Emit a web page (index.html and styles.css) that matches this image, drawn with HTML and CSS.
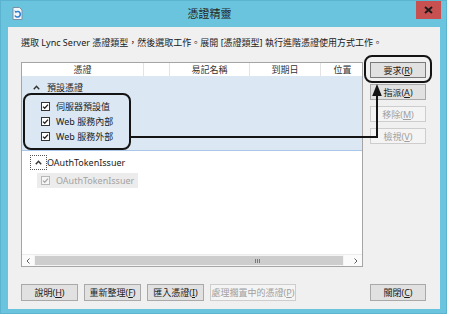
FILE: index.html
```html
<!DOCTYPE html>
<html lang="zh-Hant">
<head>
    <meta charset="UTF-8">
    <meta name="viewport" content="width=device-width, initial-scale=1.0">
    <title>憑證精靈</title>
    <link rel="stylesheet" href="styles.css">
</head>
<body>
    <div class="window">
        <div class="titlebar">
            <svg class="app-icon" viewBox="0 0 11 13">
                <path d="M1 .5h6.5L10 3v9.5H1z" fill="#f4f7fa" stroke="#7d8fa3"/>
                <path d="M3 8.5a2.8 2.8 0 1 0 1-3.6" fill="none" stroke="#2f7fd0" stroke-width="1.6"/>
                <path d="M2.3 3.6l2.6.6-1 2.3z" fill="#2f7fd0"/>
            </svg>
            <div class="title">憑證精靈</div>
            <div class="close-box">
                <svg width="9" height="8" viewBox="0 0 9 8"><path d="M1 1l7 6M8 1L1 7" stroke="#1b1b1b" stroke-width="2"/></svg>
            </div>
        </div>

        <div class="client">
            <p class="intro">選取 Lync Server 憑證類型，然後選取工作。展開 [憑證類型] 執行進階憑證使用方式工作。</p>

            <div class="main">
                <div class="list">
                    <div class="list-head">
                        <span class="col c1">憑證</span>
                        <span class="col c2"></span>
                        <span class="col c3">易記名稱</span>
                        <span class="col c4">到期日</span>
                        <span class="col c5">位置</span>
                    </div>

                    <div class="list-body">
                        <div class="group open">
                            <div class="group-head">
                                <span class="chev"><svg width="7" height="5" viewBox="0 0 7 5"><path d="M.8 4.2l2.7-3 2.7 3" fill="none" stroke="#333" stroke-width="1.4"/></svg></span>
                                預設憑證
                            </div>
                            <div class="item">
                                <svg class="check" viewBox="0 0 9 9"><rect x=".5" y=".5" width="8" height="8" fill="#fff" stroke="#333"/><path d="M2 4.6l1.7 1.7L7 2.6" fill="none" stroke="#222" stroke-width="1.3"/></svg>
                                伺服器預設值
                            </div>
                            <div class="item">
                                <svg class="check" viewBox="0 0 9 9"><rect x=".5" y=".5" width="8" height="8" fill="#fff" stroke="#333"/><path d="M2 4.6l1.7 1.7L7 2.6" fill="none" stroke="#222" stroke-width="1.3"/></svg>
                                Web 服務內部
                            </div>
                            <div class="item">
                                <svg class="check" viewBox="0 0 9 9"><rect x=".5" y=".5" width="8" height="8" fill="#fff" stroke="#333"/><path d="M2 4.6l1.7 1.7L7 2.6" fill="none" stroke="#222" stroke-width="1.3"/></svg>
                                Web 服務外部
                            </div>
                        </div>

                        <div class="group">
                            <div class="group-head">
                                <span class="chev focus"><svg width="7" height="5" viewBox="0 0 7 5"><path d="M.8 4.2l2.7-3 2.7 3" fill="none" stroke="#333" stroke-width="1.4"/></svg></span>
                                OAuthTokenIssuer
                            </div>
                            <div class="item disabled">
                                <svg class="check" viewBox="0 0 9 9"><rect x=".5" y=".5" width="8" height="8" fill="#f6f6f6" stroke="#b8b8b8"/><path d="M2 4.6l1.7 1.7L7 2.6" fill="none" stroke="#a9a9a9" stroke-width="1.3"/></svg>
                                OAuthTokenIssuer
                            </div>
                        </div>
                    </div>

                    <div class="hscroll">
                        <span class="sb-arrow"><svg width="4" height="6" viewBox="0 0 4 6"><path d="M3.5.5L1 3l2.5 2.5" fill="none" stroke="#606060"/></svg></span>
                        <span class="sb-thumb"><span class="grip"></span></span>
                        <span class="sb-track"></span>
                        <span class="sb-arrow"><svg width="4" height="6" viewBox="0 0 4 6"><path d="M.5.5L3 3 .5 5.5" fill="none" stroke="#606060"/></svg></span>
                    </div>
                </div>

                <div class="side">
                    <button class="btn default">要求(<u>R</u>)</button>
                    <button class="btn">指派(<u>A</u>)</button>
                    <button class="btn" disabled>移除(<u>M</u>)</button>
                    <button class="btn" disabled>檢視(<u>V</u>)</button>
                </div>
            </div>

            <div class="footer">
                <button class="btn">說明(<u>H</u>)</button>
                <button class="btn">重新整理(<u>F</u>)</button>
                <button class="btn">匯入憑證(<u>I</u>)</button>
                <button class="btn wide" disabled>處理擱置中的憑證(<u>P</u>)</button>
                <button class="btn close-btn">關閉(<u>C</u>)</button>
            </div>

            <!-- callout drawn over the dialog -->
            <svg class="callout" viewBox="0 0 432 282">
                <rect x="16" y="67" width="106" height="55" rx="7" fill="none" stroke="#141414" stroke-width="2"/>
                <rect x="357" y="29" width="66" height="26" rx="7" fill="none" stroke="#141414" stroke-width="2"/>
                <polyline points="122,110 369,110 369,68" fill="none" stroke="#141414" stroke-width="2"/>
                <path d="M369 57l4.8 12h-9.6z" fill="#141414"/>
            </svg>
        </div>
    </div>
</body>
</html>
```

FILE: styles.css
```css
* {
    margin: 0;
    padding: 0;
    box-sizing: border-box;
}

body {
    width: 450px;
    height: 317px;
    background: #fff;
    font-family: "Noto Sans", "Noto Sans CJK TC", sans-serif;
    font-size: 9px;
    color: #1a1a1a;
}

.window {
    width: 447px;
    height: 314px;
    background: #6bc4de;
    border: 1px solid #5bb3cf;
    display: flex;
    flex-direction: column;
}

.titlebar {
    height: 26px;
    display: flex;
    align-items: flex-start;
    padding: 0 5px 0 11px;
}

.app-icon {
    width: 11px;
    height: 13px;
    margin-top: 6px;
}

.title {
    flex: 1;
    text-align: center;
    font-size: 11px;
    line-height: 26px;
    padding-right: 20px;
    color: #1e1e1e;
}

.close-box {
    width: 25px;
    height: 18px;
    background: #c75050;
    display: flex;
    justify-content: center;
    align-items: center;
}

.client {
    flex: 1;
    position: relative;
    margin: 0 6px 4px 7px;
    padding: 10px 14px 8px 13px;
    background: #f0f0f0;
    display: flex;
    flex-direction: column;
}

.intro {
    line-height: 12px;
    white-space: nowrap;
}

.main {
    display: flex;
    gap: 7px;
    margin-top: 13px;
}

/* list view */
.list {
    width: 342px;
    height: 205px;
    border: 1px solid #a5a5a5;
    background: #fff;
    display: flex;
    flex-direction: column;
    overflow: hidden;
}

.list-head {
    display: flex;
    height: 13px;
    flex-shrink: 0;
}

.col {
    flex-shrink: 0;
    text-align: center;
    line-height: 13px;
    border-right: 1px solid #e3e3e3;
    color: #333;
}

.c1 { width: 122px; }
.c2 { width: 26px; }
.c3 { width: 80px; }
.c4 { width: 71px; }
.c5 { width: 44px; }

.list-body {
    flex: 1;
}

.group {
    display: flex;
    flex-direction: column;
}

.group.open {
    background: #dce7f4;
    border-bottom: 1px solid #aac7e8;
    padding-bottom: 6px;
}

.group-head {
    display: flex;
    align-items: center;
    height: 23px;
    padding-left: 7px;
}

.group + .group .group-head {
    height: 22px;
    padding-left: 8px;
}

.chev {
    width: 17px;
    height: 15px;
    display: flex;
    justify-content: center;
    align-items: center;
}

.group.open .chev {
    width: 18px;
    justify-content: flex-start;
    padding-left: 4px;
}

.chev.focus {
    border: 1px dotted #555;
}

.item {
    display: flex;
    align-items: center;
    height: 15px;
    padding-left: 19px;
}

.check {
    width: 9px;
    height: 9px;
    margin-right: 6px;
}

.item.disabled {
    width: max-content;
    margin-left: 15px;
    padding: 0 4px;
    background: #ececec;
    color: #a3a3a3;
}

/* horizontal scrollbar */
.hscroll {
    display: flex;
    height: 12px;
    flex-shrink: 0;
    background: #f4f4f4;
    border-top: 1px solid #ececec;
}

.sb-arrow {
    width: 12px;
    background: #fbfbfb;
    display: flex;
    justify-content: center;
    align-items: center;
}

.sb-thumb {
    width: 308px;
    margin: 1px 0 1px 1px;
    background: #cdcdcd;
    display: flex;
    align-items: center;
    padding-left: 220px;
}

.grip {
    width: 5px;
    height: 4px;
    border-left: 1px solid #7a7a7a;
    border-right: 1px solid #7a7a7a;
}

.grip::after {
    content: "";
    display: block;
    width: 1px;
    height: 4px;
    margin-left: 1px;
    background: #7a7a7a;
}

.sb-track {
    flex: 1;
    background: #fbfbfb;
    margin-left: 1px;
}

/* buttons */
.btn {
    font-family: inherit;
    font-size: 9px;
    color: #1a1a1a;
    background: #e1e1e1;
    border: 1px solid #a9a9a9;
    height: 17px;
    width: 57px;
    line-height: 15px;
}

.btn u {
    text-underline-offset: 1px;
}

.btn.default {
    border-color: #7a7a7a;
}

.btn:disabled {
    background: #f4f4f4;
    border-color: #cdcdcd;
    color: #a0a0a0;
}

.side {
    display: flex;
    flex-direction: column;
    gap: 6px;
    width: 56px;
}

.side .btn {
    width: 56px;
    height: 16px;
}

.footer {
    display: flex;
    gap: 6px;
    margin-top: 17px;
}

.btn.wide {
    width: 86px;
}

.btn.close-btn {
    width: 56px;
    margin-left: auto;
}

.callout {
    position: absolute;
    left: 0;
    top: 0;
    width: 432px;
    height: 282px;
    pointer-events: none;
}
```
